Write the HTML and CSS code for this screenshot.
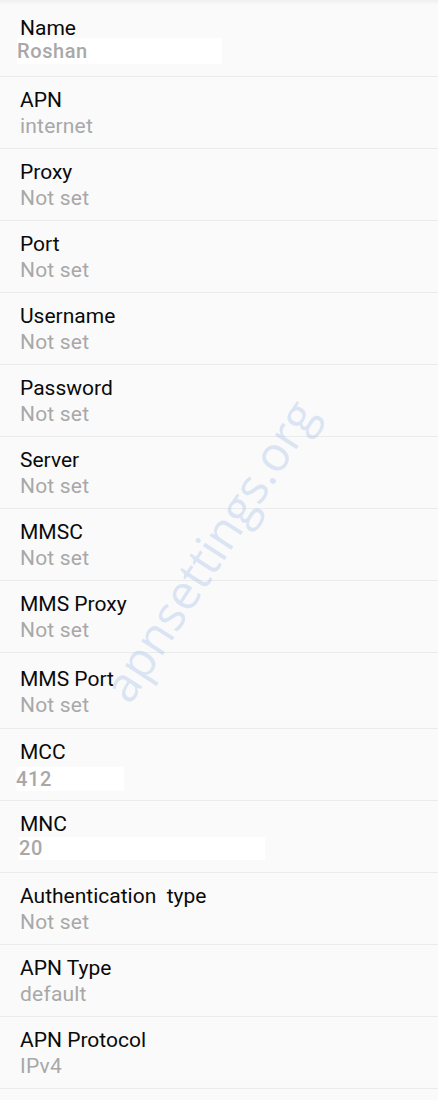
FILE: index.html
```html
<!DOCTYPE html>
<html lang="en">

<head>
  <meta charset="UTF-8" />
  <meta name="viewport" content="width=device-width, initial-scale=1.0" />
  <title>APN settings</title>
  <link rel="stylesheet" href="styles.css">
</head>

<body>
  <div class="screen">
    <ul class="apn-list">
      <li class="row">
        <span class="title">Name</span>
        <span class="value edited edited-name">Roshan</span>
      </li>
      <li class="row">
        <span class="title">APN</span>
        <span class="value">internet</span>
      </li>
      <li class="row">
        <span class="title">Proxy</span>
        <span class="value">Not set</span>
      </li>
      <li class="row">
        <span class="title">Port</span>
        <span class="value">Not set</span>
      </li>
      <li class="row">
        <span class="title">Username</span>
        <span class="value">Not set</span>
      </li>
      <li class="row">
        <span class="title">Password</span>
        <span class="value">Not set</span>
      </li>
      <li class="row">
        <span class="title">Server</span>
        <span class="value">Not set</span>
      </li>
      <li class="row">
        <span class="title">MMSC</span>
        <span class="value">Not set</span>
      </li>
      <li class="row">
        <span class="title">MMS Proxy</span>
        <span class="value">Not set</span>
      </li>
      <li class="row row-tall">
        <span class="title">MMS Port</span>
        <span class="value">Not set</span>
      </li>
      <li class="row">
        <span class="title">MCC</span>
        <span class="value edited edited-mcc">412</span>
      </li>
      <li class="row">
        <span class="title">MNC</span>
        <span class="value edited edited-mnc">20</span>
      </li>
      <li class="row">
        <span class="title">Authentication&nbsp; type</span>
        <span class="value">Not set</span>
      </li>
      <li class="row">
        <span class="title">APN Type</span>
        <span class="value">default</span>
      </li>
      <li class="row">
        <span class="title">APN Protocol</span>
        <span class="value">IPv4</span>
      </li>
    </ul>

    <div class="watermark">apnsettings.org</div>
  </div>
</body>

</html>
```

FILE: styles.css
```css
:root {
  --bg: #fafafa;
  --line: #ebebeb;
  --title: #0a0a0a;
  --value: #a8a8a8;
  --mark: rgba(170, 195, 232, 0.4);
}

body {
  margin: 0;
  background-color: var(--bg);
  font-family: Roboto, 'Liberation Sans', sans-serif;
}

.screen {
  position: relative;
  width: 438px;
  height: 1100px;
  overflow: hidden;
  background: linear-gradient(to bottom, #efefef 0, var(--bg) 5px);
}

.apn-list {
  list-style: none;
  margin: 0;
  padding: 5px 0 0;
}

.row {
  display: flex;
  flex-direction: column;
  box-sizing: border-box;
  height: 72px;
  padding: 10px 20px 0;
  border-bottom: 1px solid var(--line);
  font-size: 21px;
  line-height: 26px;
}

.row-tall {
  height: 76px;
  padding-top: 13px;
}

.title {
  color: var(--title);
}

.value {
  color: var(--value);
  letter-spacing: 0.2px;
}

/* white patches where the values were edited out */
.edited {
  background-color: #fff;
  font-size: 20px;
  font-weight: 500;
  letter-spacing: 0.6px;
}

.edited-name {
  width: 205px;
  margin-left: -3px;
  margin-top: -3px;
}

.edited-mcc {
  width: 108px;
  height: 24px;
  line-height: 24px;
  margin-left: -4px;
  margin-top: 2px;
}

.edited-mnc {
  width: 246px;
  height: 23px;
  line-height: 23px;
  margin-left: -1px;
}

.watermark {
  position: absolute;
  left: 209px;
  top: 550px;
  transform: translate(-50%, -50%) rotate(-57deg);
  font-family: 'Open Sans', sans-serif;
  font-size: 48px;
  white-space: nowrap;
  color: var(--mark);
  pointer-events: none;
}
```
